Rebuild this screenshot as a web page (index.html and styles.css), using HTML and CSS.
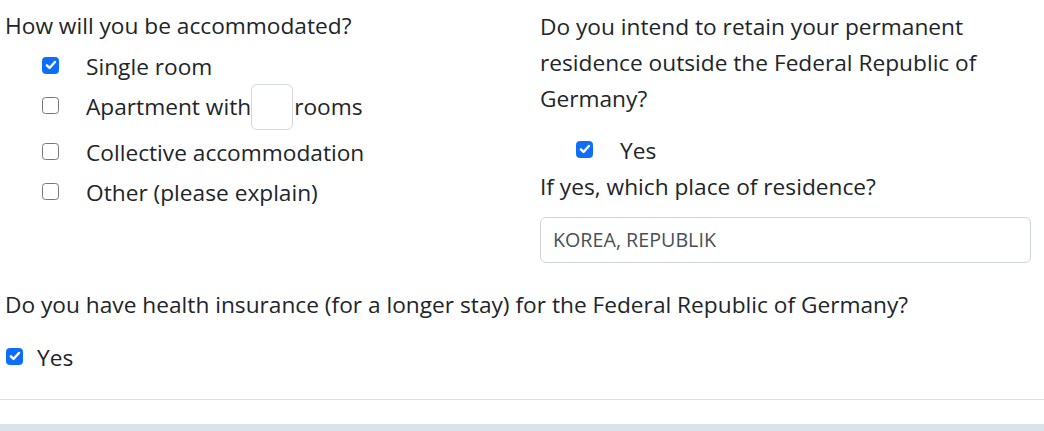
FILE: index.html
```html
<!DOCTYPE html>
<html lang="en">
<head>
<meta charset="utf-8">
<title>Residence questions</title>
<link rel="stylesheet" href="styles.css">
</head>
<body>
<main class="form">
  <div class="cols">
    <section class="col col-left">
      <p class="q">How will you be accommodated?</p>
      <div class="opts">
        <div class="opt"><span class="cb cb-on"><svg viewBox="0 0 16 16" width="14" height="14"><path d="M3.3 8.4l3 3 6.2-6.8" fill="none" stroke="#fff" stroke-width="2.8" stroke-linecap="round" stroke-linejoin="round"/></svg></span><span class="lbl">Single room</span></div>
        <div class="opt opt-tall"><span class="cb"></span><span class="lbl">Apartment with</span><span class="num"></span><span class="after">rooms</span></div>
        <div class="opt"><span class="cb"></span><span class="lbl">Collective accommodation</span></div>
        <div class="opt"><span class="cb"></span><span class="lbl">Other (please explain)</span></div>
      </div>
    </section>
    <section class="col col-right">
      <p class="q q-tall">Do you intend to retain your permanent residence outside the Federal Republic of Germany?</p>
      <div class="opt opt-yes"><span class="cb cb-on"><svg viewBox="0 0 16 16" width="14" height="14"><path d="M3.3 8.4l3 3 6.2-6.8" fill="none" stroke="#fff" stroke-width="2.8" stroke-linecap="round" stroke-linejoin="round"/></svg></span><span class="lbl">Yes</span></div>
      <p class="q q-sub">If yes, which place of residence?</p>
      <div class="field">KOREA, REPUBLIK</div>
    </section>
  </div>
  <p class="q q-health">Do you have health insurance (for a longer stay) for the Federal Republic of Germany?</p>
  <div class="opt opt-flat"><span class="cb cb-on"><svg viewBox="0 0 16 16" width="14" height="14"><path d="M3.3 8.4l3 3 6.2-6.8" fill="none" stroke="#fff" stroke-width="2.8" stroke-linecap="round" stroke-linejoin="round"/></svg></span><span class="lbl">Yes</span></div>
  <hr class="rule">
  <div class="band"></div>
</main>
</body>
</html>
```
FILE: styles.css
```css
* { box-sizing: border-box; }
html, body { margin: 0; padding: 0; background: #fff; }
body {
  font-family: "Open Sans", "Noto Sans", "DejaVu Sans", sans-serif;
  font-size: 22.7px;
  line-height: 30px;
  color: #212529;
  overflow: hidden;
}
.form { padding: 0; }
.cols {
  display: grid;
  grid-template-columns: 490px 491px;
  column-gap: 45px;
  padding-left: 5px;
}
.col-left { padding-top: 11px; }
.col-right { padding-top: 9px; }
.q { margin: 0; }
.q-tall { line-height: 36px; }
.opts { margin-top: 6px; padding-left: 37px; }
.opt {
  display: flex;
  align-items: center;
  height: 40px;
}
.opt-tall { height: 46px; padding-bottom: 6px; }
.cb {
  flex: none;
  width: 17px;
  height: 17px;
  border: 1.5px solid #75797d;
  border-radius: 3.5px;
  margin-bottom: 4px;
  margin-right: 27px;
  display: flex;
  align-items: center;
  justify-content: center;
  background: #fff;
}
.cb-on { background: #0d6efd; border-color: #0d6efd; }
.num {
  width: 42px;
  height: 46px;
  border: 1px solid #d3d8de;
  border-radius: 6px;
}
.after { margin-left: 1px; }
.opt-yes { margin-top: 14px; padding-left: 36px; }
.q-sub { margin-top: 1px; }
.field {
  margin-top: 15px;
  height: 46px;
  border: 1px solid #ced4da;
  border-radius: 6px;
  padding: 0 12px;
  display: flex;
  align-items: center;
  font-size: 19.7px;
  color: #495057;
}
.q-health { margin-top: 27px; padding-left: 5px; }
.opt-flat { margin-top: 18px; padding-left: 6px; }
.opt-flat .cb { margin-right: 14px; }
.rule { margin: 21px 0 0; border: 0; border-top: 1px solid #dcdfe2; }
.band { margin-top: 24px; height: 7px; background: #d8e3ea; }
```
